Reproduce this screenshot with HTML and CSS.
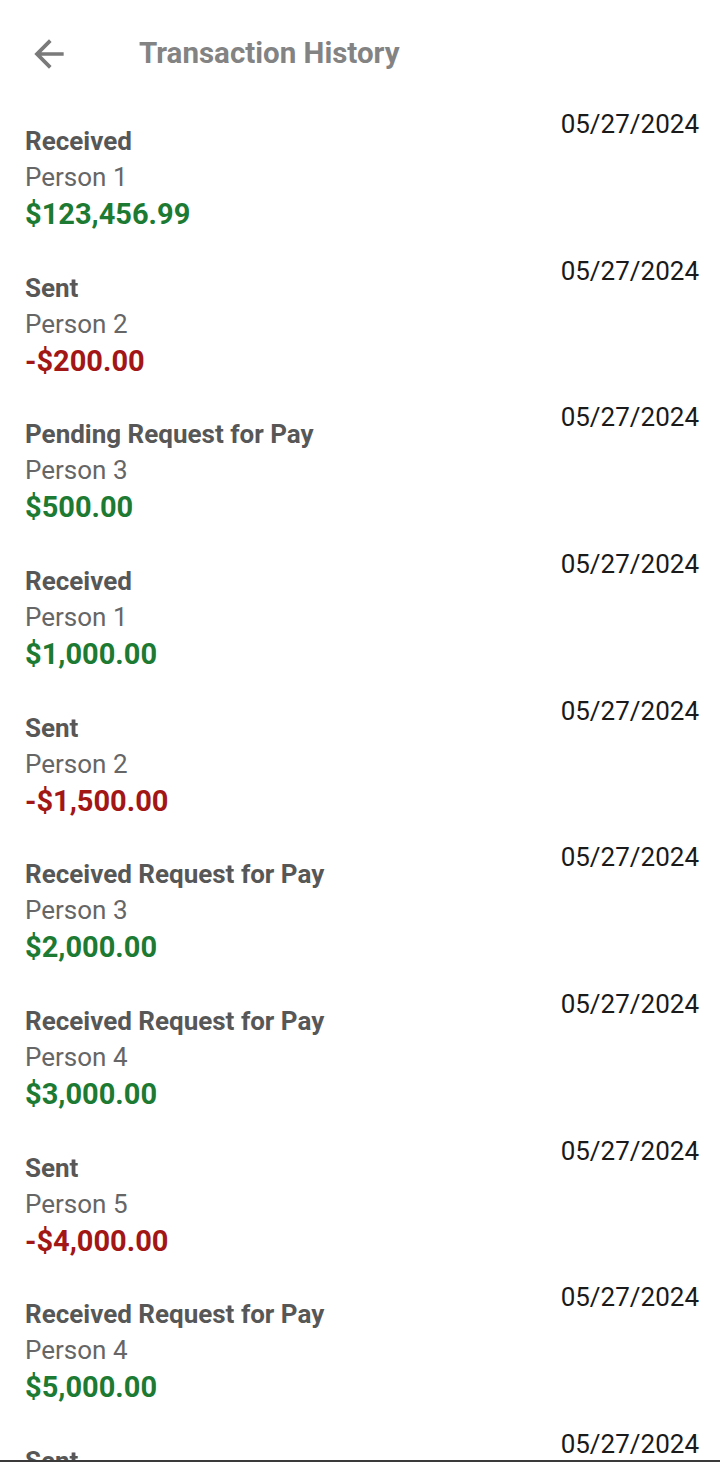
FILE: index.html
```html
<!DOCTYPE html>
<html>
<head>
<meta charset="utf-8">
<link rel="stylesheet" href="styles.css">
</head>
<body>
<div class="screen">
  <header class="topbar">
    <svg class="back" viewBox="0 0 24 24" width="44" height="44"><path d="M20 11H7.83l5.59-5.59L12 4l-8 8 8 8 1.41-1.41L7.83 13H20v-2z" fill="#7a7a7a"/></svg>
    <h1 class="title">Transaction History</h1>
  </header>
  <main class="list">
    <div class="item"><div class="info"><div class="kind">Received</div><div class="who">Person 1</div><div class="amt pos">$123,456.99</div></div><div class="date">05/27/2024</div></div>
    <div class="item"><div class="info"><div class="kind">Sent</div><div class="who">Person 2</div><div class="amt neg">-$200.00</div></div><div class="date">05/27/2024</div></div>
    <div class="item"><div class="info"><div class="kind">Pending Request for Pay</div><div class="who">Person 3</div><div class="amt pos">$500.00</div></div><div class="date">05/27/2024</div></div>
    <div class="item"><div class="info"><div class="kind">Received</div><div class="who">Person 1</div><div class="amt pos">$1,000.00</div></div><div class="date">05/27/2024</div></div>
    <div class="item"><div class="info"><div class="kind">Sent</div><div class="who">Person 2</div><div class="amt neg">-$1,500.00</div></div><div class="date">05/27/2024</div></div>
    <div class="item"><div class="info"><div class="kind">Received Request for Pay</div><div class="who">Person 3</div><div class="amt pos">$2,000.00</div></div><div class="date">05/27/2024</div></div>
    <div class="item"><div class="info"><div class="kind">Received Request for Pay</div><div class="who">Person 4</div><div class="amt pos">$3,000.00</div></div><div class="date">05/27/2024</div></div>
    <div class="item"><div class="info"><div class="kind">Sent</div><div class="who">Person 5</div><div class="amt neg">-$4,000.00</div></div><div class="date">05/27/2024</div></div>
    <div class="item"><div class="info"><div class="kind">Received Request for Pay</div><div class="who">Person 4</div><div class="amt pos">$5,000.00</div></div><div class="date">05/27/2024</div></div>
    <div class="item"><div class="info"><div class="kind">Sent</div><div class="who">Person 6</div><div class="amt neg">-$6,000.00</div></div><div class="date">05/27/2024</div></div>
  </main>
  <div class="bottomline"></div>
</div>
</body>
</html>
```

FILE: styles.css
```css
html, body {
  margin: 0;
  padding: 0;
  background: #fff;
}
body {
  font-family: Roboto, "Liberation Sans", sans-serif;
}
.screen {
  width: 720px;
  height: 1462px;
  display: flex;
  flex-direction: column;
  overflow: hidden;
}
.topbar {
  flex: none;
  height: 100px;
  box-sizing: border-box;
  padding: 7px 0 0 27px;
  display: flex;
  align-items: center;
}
.back {
  flex: none;
  display: block;
}
.title {
  margin: 0 0 0 68px;
  font-size: 29.5px;
  line-height: 1;
  font-weight: 700;
  color: #838383;
}
.list {
  flex: 1;
  min-height: 0;
  overflow: hidden;
}
.item {
  height: 146.67px;
  box-sizing: border-box;
  padding: 9px 21px 0 25px;
  display: flex;
  justify-content: space-between;
  align-items: flex-start;
}
.info {
  margin-top: 15px;
  display: flex;
  flex-direction: column;
}
.kind {
  font-size: 26px;
  line-height: 35px;
  font-weight: 700;
  color: #575757;
}
.who {
  font-size: 26px;
  line-height: 37px;
  color: #666;
}
.amt {
  font-size: 29px;
  line-height: 37px;
  font-weight: 700;
}
.pos { color: #1d7a33; }
.neg { color: #a21616; }
.date {
  font-size: 26px;
  line-height: 30px;
  color: #1a1a1a;
}
.bottomline {
  flex: none;
  height: 2px;
  background: #3a3a3a;
}
```
